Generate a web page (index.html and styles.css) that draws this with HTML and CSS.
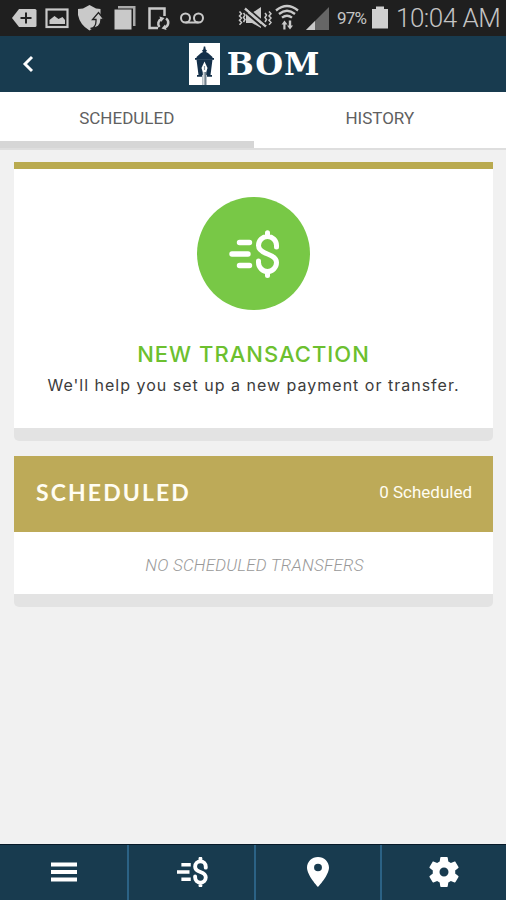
FILE: index.html
```html
<!DOCTYPE html>
<html lang="en">
<head>
    <meta charset="UTF-8">
    <meta name="viewport" content="width=device-width, initial-scale=1.0">
    <title>BOM - Transfers</title>
    <link rel="stylesheet" href="styles.css">
</head>
<body>
    <!-- Status bar -->
    <div class="status-bar">
        <div class="status-left">
            <svg width="26" height="36" viewBox="0 0 26 36">
                <path d="M1 18l7-9h16q1.500 0 1.500 1.500v15q0 1.500-1.500 1.500H8z" fill="#c9c9c9"/>
                <path d="M15 12.500v11M9.500 18h11" stroke="#222" stroke-width="2"/>
            </svg>
            <svg width="26" height="36" viewBox="0 0 26 36">
                <rect x="2.500" y="9.500" width="21" height="17.500" fill="none" stroke="#c9c9c9" stroke-width="2.200"/>
                <path d="M5.500 24v-4l5-4 4 3 4-2 2.500 3v4z" fill="#c9c9c9"/>
            </svg>
            <svg width="26" height="36" viewBox="0 0 26 36">
                <path d="M0 9l5-.5L11.500 5l6.500 3.500 4.500 .5v7q-2 10-11 14.500Q2 25 0 15z" fill="#c9c9c9"/>
                <path d="M12.500 28.500q6-1 5.500-9h-3.500l6-7 5.500 7h-3q0 9-10.500 9z" fill="#c9c9c9" stroke="#222" stroke-width="1.300"/>
            </svg>
            <svg width="26" height="36" viewBox="0 0 26 36">
                <path d="M6 6h17.500v20H21V8.500H6z" fill="#aaa"/>
                <rect x="2.500" y="9.500" width="17" height="20" fill="#c9c9c9"/>
            </svg>
            <svg width="26" height="36" viewBox="0 0 26 36">
                <path d="M12 28H3.500V8.500h15V16" fill="none" stroke="#c9c9c9" stroke-width="2.500"/>
                <path d="M13.500 27a5 5 0 0 1 2-8M20 18.500a5 5 0 0 1-1.500 9" fill="none" stroke="#c9c9c9" stroke-width="2.500"/>
                <path d="M13.500 16.500l5 1.500-3.500 4zM20.500 30l-5-1.500 3.500-4z" fill="#c9c9c9"/>
            </svg>
            <svg width="26" height="36" viewBox="0 0 26 36">
                <g fill="none" stroke="#c9c9c9" stroke-width="2">
                    <circle cx="6.500" cy="18" r="4.500"/>
                    <circle cx="19.500" cy="18" r="4.500"/>
                    <path d="M6.500 22.500h13"/>
                </g>
            </svg>
        </div>
        <div class="status-right">
            <svg width="34" height="36" viewBox="0 0 34 36">
                <path d="M8 13h6l9-6v21l-9-5H8z" fill="#c9c9c9"/>
                <path d="M6 11l20 17" stroke="#222" stroke-width="2"/>
                <path d="M7 8.500l21 18" stroke="#c9c9c9" stroke-width="2.500"/>
                <path d="M8.500 7l20 17.500" stroke="#222" stroke-width="1.600"/>
                <path d="M1.500 11.500l2 2.200-2 2.200 2 2.200-2 2.200 2 2.200-2 2.200M5.500 13l1.500 2-1.500 2.500 1.500 2-1.500 2.500M31 11.500l2 2.200-2 2.200 2 2.200-2 2.200 2 2.200-2 2.200M27 13l1.500 2-1.500 2.500 1.500 2-1.500 2.500" fill="none" stroke="#c9c9c9" stroke-width="1.500"/>
            </svg>
            <svg class="wifi" width="24" height="36" viewBox="0 0 24 36">
                <path d="M1 10.500q11-9 22 0M4 14q8-6.500 16 0M7 17.700q5-4 10 0" fill="none" stroke="#c9c9c9" stroke-width="2.300"/>
                <path d="M9.500 20.500l3 4h-2v5H8.300v-5H6.500zM15 29.500l-3-4h1.800v-5h2.400v5H18z" fill="#c9c9c9"/>
            </svg>
            <svg class="signal" width="24" height="36" viewBox="0 0 24 36">
                <path d="M0 30L23 7v23z" fill="#666"/>
                <path d="M0 30l9-9v9z" fill="#c9c9c9"/>
            </svg>
            <span class="battery-text">97%</span>
            <svg width="16" height="36" viewBox="0 0 16 36">
                <path d="M0 9h4V6.500h8V9h4v19.500H0z" fill="#d0d0d0"/>
            </svg>
            <span class="clock">10:04 AM</span>
        </div>
    </div>

    <!-- Header -->
    <header class="header">
        <svg class="back" width="12" height="18" viewBox="0 0 12 18">
            <path d="M10 2L3 9l7 7" fill="none" stroke="#fff" stroke-width="2.900"/>
        </svg>
        <div class="logo">
            <svg width="31" height="42" viewBox="0 0 31 42">
                <rect width="31" height="42" fill="#fff"/>
                <g fill="#14304a">
                    <path d="M14.800 3.500h1.400l.5 3 1.300 1-1 1.500 2 1 4.500 4v1h-16v-1l4.500-4 2-1-1-1.500 1.300-1z"/>
                    <path d="M6 15h19v1.800H6z"/>
                    <path d="M7.500 16.500h16L21.500 32h1.500v1.800h-5V32h-5v1.800H8V32h1.500z"/>
                </g>
                <path d="M15.500 18.500l3 6.500-1.500 5h-3l-1.500-5z" fill="#fff"/>
                <path d="M15.500 23v4" stroke="#8595a3" stroke-width="1.200"/>
                <path d="M13.500 29h4v13h-4z" fill="#71818d"/>
                <path d="M14.800 29v13" stroke="#fff"/>
            </svg>
            <span class="logo-text">BOM</span>
        </div>
    </header>

    <!-- Tabs -->
    <div class="tabs">
        <div class="tab active">SCHEDULED</div>
        <div class="tab">HISTORY</div>
    </div>

    <main class="content">
        <section class="card new-card">
            <div class="circle">
                <svg width="50" height="48" viewBox="0 0 50 48">
                    <g fill="none" stroke="#fff" stroke-linecap="round" stroke-linejoin="round">
                        <path d="M10.500 12.500h10M3 24h16M10.500 35.500h10" stroke-width="5.400"/>
                        <path d="M47.500 17v-1.500a9 9 0 0 0-18 0c0 4.500 3.500 6.500 9 8.500s9 4 9 8.500a9 9 0 0 1-18 0V31M38.500 6V2.800M38.500 45.500v-4" stroke-width="5"/>
                    </g>
                </svg>
            </div>
            <h2 class="new-title">NEW TRANSACTION</h2>
            <p class="new-text">We'll help you set up a new payment or transfer.</p>
        </section>

        <section class="card">
            <div class="card-header">
                <h2 class="card-title">SCHEDULED</h2>
                <span class="card-count">0 Scheduled</span>
            </div>
            <p class="empty">NO SCHEDULED TRANSFERS</p>
        </section>
    </main>

    <!-- Bottom menu -->
    <nav class="bottom-menu">
        <div class="menu-item">
            <svg width="28" height="22" viewBox="0 0 28 22">
                <path d="M1 3.500h26M1 11h26M1 18.500h26" stroke="#fff" stroke-width="3.800"/>
            </svg>
        </div>
        <div class="menu-item">
            <svg width="32" height="30" viewBox="0 0 50 48">
                <g fill="none" stroke="#fff" stroke-linejoin="round">
                    <path d="M8 12.500h15M1 24h20M8 35.500h15" stroke-width="5.500"/>
                    <path d="M47 17v-1.500a8.500 8.500 0 0 0-17 0c0 4.500 3 6.500 8.500 8.500s8.500 4 8.500 8.500a8.500 8.500 0 0 1-17 0V31M38.500 6.500V2.500M38.500 45.500v-4" stroke-width="6.200" stroke-linecap="round"/>
                </g>
            </svg>
        </div>
        <div class="menu-item">
            <svg width="22" height="30" viewBox="0 0 14 20" preserveAspectRatio="none">
                <path d="M7 0C3.130 0 0 3.130 0 7c0 5.250 7 13 7 13s7-7.750 7-13c0-3.870-3.130-7-7-7zm0 9.500a2.500 2.500 0 0 1 0-5 2.500 2.500 0 0 1 0 5z" fill="#fff"/>
            </svg>
        </div>
        <div class="menu-item">
            <svg width="36" height="36" viewBox="0 0 24 24">
                <path d="M19.430 12.980c.04-.32.07-.64.07-.98s-.03-.66-.07-.98l2.110-1.650c.19-.15.24-.42.12-.64l-2-3.460c-.12-.22-.39-.3-.61-.22l-2.490 1c-.52-.4-1.080-.73-1.690-.98l-.38-2.650C14.460 2.180 14.250 2 14 2h-4c-.25 0-.46.18-.49.42l-.38 2.650c-.61.25-1.170.59-1.690.98l-2.490-1c-.23-.09-.49 0-.61.22l-2 3.460c-.13.22-.07.49.12.64l2.110 1.650c-.04.32-.07.65-.07.98s.03.66.07.98l-2.110 1.650c-.19.15-.24.42-.12.64l2 3.460c.12.22.39.3.61.22l2.490-1c.52.4 1.080.73 1.690.98l.38 2.650c.03.24.24.42.49.42h4c.25 0 .46-.18.49-.42l.38-2.650c.61-.25 1.170-.59 1.690-.98l2.490 1c.23.09.49 0 .61-.22l2-3.460c.12-.22.07-.49-.12-.64l-2.110-1.650zM12 15a3 3 0 1 1 0-6 3 3 0 0 1 0 6z" fill="#fff"/>
            </svg>
        </div>
    </nav>
</body>
</html>
```
FILE: styles.css
```css
* {
    box-sizing: border-box;
}

body {
    margin: 0;
    height: 100vh;
    display: flex;
    flex-direction: column;
    overflow: hidden;
    font-family: Roboto, sans-serif;
    background: #f1f1f1;
}

h2, p {
    margin: 0;
}

svg {
    display: block;
    flex-shrink: 0;
}

/* Status bar */
.status-bar {
    height: 36px;
    flex-shrink: 0;
    display: flex;
    justify-content: space-between;
    padding: 0 6px 0 10.5px;
    background: #1f1f1f;
    color: #c4c4c4;
}

.status-left {
    display: flex;
    gap: 7.8px;
}

.status-right {
    display: flex;
    align-items: center;
}

.wifi {
    margin-left: 3px;
}

.signal {
    margin-left: 7px;
}

.battery-text {
    width: 35px;
    margin-left: 7px;
    font-size: 17px;
    letter-spacing: -0.8px;
}

.clock {
    width: 104px;
    margin-left: 8px;
    font-size: 26px;
    font-weight: 300;
    letter-spacing: -0.5px;
    white-space: nowrap;
}

/* Header */
.header {
    height: 56px;
    flex-shrink: 0;
    display: grid;
    grid-template-columns: 1fr auto 1fr;
    align-items: center;
    padding-bottom: 1px;
    background: #183b4f;
}

.back {
    margin-left: 22px;
}

.logo {
    display: flex;
    align-items: center;
    gap: 7px;
    margin-left: 3px;
    color: #fff;
}

.logo-text {
    font-family: "DejaVu Serif", serif;
    font-size: 32px;
    font-weight: bold;
    line-height: 42px;
    letter-spacing: 0.8px;
    padding-top: 1px;
}

/* Tabs */
.tabs {
    height: 58px;
    flex-shrink: 0;
    display: flex;
    background: #fff;
    border-bottom: 2px solid #dedede;
}

.tab {
    width: 50%;
    padding-top: 15px;
    font-size: 17px;
    line-height: 23px;
    text-align: center;
    color: #606060;
}

.tab.active {
    width: 254px;
    border-bottom: 7px solid #d6d6d6;
}

/* Cards */
.content {
    flex-grow: 1;
    display: flex;
    flex-direction: column;
    gap: 15px;
    padding: 12px 13px 0 14px;
}

.card {
    background: #fff;
    border-bottom: 13px solid #e3e3e3;
    border-radius: 0 0 5px 5px;
}

.new-card {
    height: 279px;
    display: flex;
    flex-direction: column;
    align-items: center;
    padding-top: 28px;
    border-top: 7px solid #b9aa4f;
}

.circle {
    width: 113px;
    height: 113px;
    display: flex;
    justify-content: center;
    align-items: center;
    border-radius: 50%;
    background: #78c846;
}

.new-title {
    margin-top: 30px;
    font-family: Inter, sans-serif;
    font-size: 22px;
    font-weight: 500;
    line-height: 28px;
    letter-spacing: 1px;
    color: #6cc02f;
}

.new-text {
    margin-top: 5px;
    font-family: Inter, sans-serif;
    font-size: 16px;
    line-height: 24px;
    letter-spacing: 1px;
    white-space: nowrap;
    color: #3c3c3c;
}

.card-header {
    height: 76px;
    display: flex;
    justify-content: space-between;
    align-items: center;
    padding: 0 21px 4px 22px;
    background: #bdaa58;
    color: #fffdf2;
}

.card-title {
    font-family: Lato, sans-serif;
    font-size: 23px;
    font-weight: bold;
    letter-spacing: 2.1px;
}

.card-count {
    font-size: 17px;
}

.empty {
    height: 62px;
    padding-left: 2px;
    font-size: 17px;
    font-weight: 300;
    font-style: italic;
    line-height: 67px;
    letter-spacing: 0.2px;
    text-align: center;
    color: #999;
}

/* Bottom menu */
.bottom-menu {
    height: 56px;
    flex-shrink: 0;
    display: grid;
    grid-template-columns: 127px 127px 126px 126px;
    background: #183b4f;
    border-top: 1px solid #071a29;
}

.menu-item {
    display: flex;
    justify-content: center;
    align-items: center;
    padding-bottom: 2px;
}

.menu-item + .menu-item {
    border-left: 2px solid #2b6285;
}
```
